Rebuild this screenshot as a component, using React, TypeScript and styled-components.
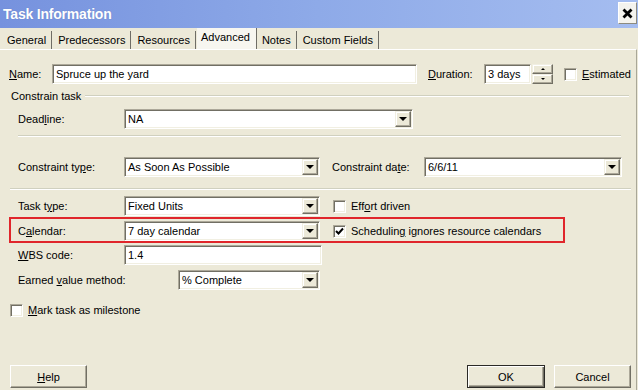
import styled, { createGlobalStyle } from 'styled-components';

const GlobalStyle = createGlobalStyle`
  html, body {
    margin: 0;
    padding: 0;
    background: #ece9d8;
  }
  body {
    font-family: "Liberation Sans", Arial, sans-serif;
    font-size: 11px;
    color: #000;
  }
  u {
    text-decoration: underline;
    text-underline-offset: 1px;
  }
`;

const Window = styled.div`
  width: 638px;
  height: 390px;
  display: flex;
  flex-direction: column;
  overflow: hidden;
  background: #ece9d8;
`;

const TitleBar = styled.div`
  height: 28px;
  flex-shrink: 0;
  display: flex;
  align-items: center;
  justify-content: space-between;
  padding: 0 1px 0 3px;
  background: linear-gradient(to right, #7692de 0%, #8eaae8 50%, #a5bdf0 100%);
`;

const Title = styled.div`
  font-size: 14px;
  font-weight: bold;
  color: #fff;
  letter-spacing: -0.2px;
  text-shadow: 0 0 1px rgba(60, 80, 140, 0.4);
  margin-top: -1px;
`;

const CloseButton = styled.div`
  width: 19px;
  height: 22px;
  margin-top: -2px;
  display: flex;
  align-items: center;
  justify-content: center;
  background: #f4f3ee;
  border: 1px solid;
  border-color: #fff #8d8b80 #8d8b80 #fff;
  box-sizing: border-box;
`;

const TabStrip = styled.div`
  height: 21px;
  flex-shrink: 0;
  display: flex;
  align-items: flex-end;
  padding-left: 2px;
`;

const Tab = styled.div<{ $active?: boolean }>`
  height: ${(p) => (p.$active ? 21 : 18)}px;
  padding: 0 ${(p) => (p.$active ? 6 : 5)}px 0 ${(p) => (p.$active ? 4 : 5)}px;
  margin: 0 ${(p) => (p.$active ? 0 : 1)}px 0 0;
  display: flex;
  align-items: center;
  box-sizing: border-box;
  border-right: 1px solid #6f6d66;
  background: ${(p) => (p.$active ? '#f7f6f0' : 'transparent')};
  white-space: nowrap;
  line-height: 1;
  padding-bottom: ${(p) => (p.$active ? 3 : 0)}px;
`;

const Panel = styled.div`
  flex: 1;
  display: flex;
  flex-direction: column;
  border-top: 1px solid #fff;
  border-right: 1px solid #a9a798;
  margin-right: 1px;
  padding-bottom: 2px;
`;

const Row = styled.div<{ $top: number; $left?: number; $mark?: boolean }>`
  position: relative;
  display: flex;
  align-items: center;
  height: 20px;
  margin-top: ${(p) => p.$top}px;
  padding-left: ${(p) => p.$left ?? 18}px;
  flex-shrink: 0;

  ${(p) =>
    p.$mark &&
    `
    &::after {
      content: '';
      position: absolute;
      left: 9px;
      top: -4px;
      width: 556px;
      height: 26px;
      box-sizing: border-box;
      border: 2px solid #e0262b;
      pointer-events: none;
    }
  `}
`;

const Label = styled.span<{ $w?: number; $gap?: number }>`
  width: ${(p) => (p.$w ? `${p.$w}px` : 'auto')};
  margin-left: ${(p) => p.$gap ?? 0}px;
  flex-shrink: 0;
  white-space: nowrap;
`;

const Field = styled.div<{ $w: number }>`
  width: ${(p) => p.$w}px;
  height: 20px;
  box-sizing: border-box;
  flex-shrink: 0;
  display: flex;
  align-items: center;
  justify-content: space-between;
  background: #fff;
  border: 1px solid;
  border-color: #aca899 #fff #fff #aca899;
  box-shadow: inset 1px 1px 0 #716f64, inset -1px -1px 0 #f1efe2;
  padding-left: 3px;
  white-space: nowrap;
`;

const DropButton = styled.div`
  width: 16px;
  height: 16px;
  margin-right: 1px;
  box-sizing: border-box;
  display: flex;
  align-items: center;
  justify-content: center;
  background: #ece9d8;
  border: 1px solid;
  border-color: #f1efe2 #716f64 #716f64 #f1efe2;
  box-shadow: inset -1px -1px 0 #aca899, inset 1px 1px 0 #fff;
`;

const Triangle = styled.span<{ $up?: boolean; $size?: number }>`
  width: 0;
  height: 0;
  border-left: ${(p) => p.$size ?? 4}px solid transparent;
  border-right: ${(p) => p.$size ?? 4}px solid transparent;
  ${(p) =>
    p.$up
      ? `border-bottom: ${Math.ceil((p.$size ?? 4) / 2) + 1}px solid #000;`
      : `border-top: ${p.$size ?? 4}px solid #000;`}
`;

const Spinner = styled.div`
  width: 21px;
  height: 20px;
  margin-left: 1px;
  display: flex;
  flex-direction: column;
  flex-shrink: 0;
`;

const SpinButton = styled(DropButton)`
  width: 21px;
  height: 10px;
  margin: 0;
`;

const Check = styled.div<{ $gap: number }>`
  width: 13px;
  height: 13px;
  margin-left: ${(p) => p.$gap}px;
  margin-right: 5px;
  box-sizing: border-box;
  flex-shrink: 0;
  display: flex;
  align-items: center;
  justify-content: center;
  background: #fff;
  border: 1px solid;
  border-color: #aca899 #fff #fff #aca899;
  box-shadow: inset 1px 1px 0 #716f64, inset -1px -1px 0 #f1efe2;
`;

const GroupHeader = styled.div`
  display: flex;
  align-items: center;
  height: 12px;
  margin-top: 6px;
  padding-left: 11px;
  padding-right: 7px;
  flex-shrink: 0;
  gap: 4px;

  &::after {
    content: '';
    flex: 1;
    height: 0;
    border-top: 1px solid #d0d0bf;
    border-bottom: 1px solid #fff;
  }
`;

const Etch = styled.div<{ $top: number; $left: number; $right: number }>`
  height: 0;
  flex-shrink: 0;
  margin: ${(p) => p.$top}px ${(p) => p.$right}px 0 ${(p) => p.$left}px;
  border-top: 1px solid #d0d0bf;
  border-bottom: 1px solid #fff;
`;

const Footer = styled.div`
  margin-top: auto;
  display: flex;
  align-items: center;
  padding: 0 5px 0 10px;
`;

const Button = styled.div<{ $default?: boolean }>`
  width: ${(p) => (p.$default ? 78 : 77)}px;
  height: 23px;
  box-sizing: border-box;
  display: flex;
  align-items: center;
  justify-content: center;
  background: #ece9d8;
  border: 1px solid;
  border-color: ${(p) => (p.$default ? '#2b2a26' : '#fff #716f64 #716f64 #fff')};
  box-shadow: ${(p) =>
    p.$default
      ? 'inset 1px 1px 0 #fff, inset -1px -1px 0 #716f64, inset -2px -2px 0 #aca899'
      : 'inset -1px -1px 0 #aca899'};
  margin-left: ${(p) => (p.$default ? 'auto' : '9px')};
  &:first-child {
    margin-left: 0;
  }
`;

const Combo = ({ w, value }: { w: number; value: string }) => (
  <Field $w={w}>
    <span>{value}</span>
    <DropButton>
      <Triangle />
    </DropButton>
  </Field>
);

const CheckMark = () => (
  <svg width="9" height="9" viewBox="0 0 9 9">
    <path d="M1 4 L3.5 6.5 L8 1.5" fill="none" stroke="#000" strokeWidth="2" />
  </svg>
);

export default function App() {
  return (
    <Window>
      <GlobalStyle />
      <TitleBar>
        <Title>Task Information</Title>
        <CloseButton>
          <svg width="11" height="11" viewBox="0 0 11 11">
            <path d="M1.5 1.5 L9.5 9.5 M9.5 1.5 L1.5 9.5" stroke="#000" strokeWidth="2.8" />
          </svg>
        </CloseButton>
      </TitleBar>

      <TabStrip>
        <Tab>General</Tab>
        <Tab>Predecessors</Tab>
        <Tab>Resources</Tab>
        <Tab $active>Advanced</Tab>
        <Tab>Notes</Tab>
        <Tab>Custom Fields</Tab>
      </TabStrip>

      <Panel>
        <Row $top={14} $left={9}>
          <Label $w={43}>
            <u>N</u>ame:
          </Label>
          <Field $w={365}>Spruce up the yard</Field>
          <Label $w={56} $gap={11}>
            <u>D</u>uration:
          </Label>
          <Field $w={47}>3 days</Field>
          <Spinner>
            <SpinButton>
              <Triangle $up $size={2} />
            </SpinButton>
            <SpinButton>
              <Triangle $size={2} />
            </SpinButton>
          </Spinner>
          <Check $gap={11} />
          <Label>
            <u>E</u>stimated
          </Label>
        </Row>

        <GroupHeader>Constrain task</GroupHeader>

        <Row $top={7}>
          <Label $w={106}>
            Dead<u>l</u>ine:
          </Label>
          <Combo w={289} value="NA" />
        </Row>

        <Etch $top={6} $left={18} $right={15} />

        <Row $top={20}>
          <Label $w={106}>
            Constraint ty<u>p</u>e:
          </Label>
          <Combo w={196} value="As Soon As Possible" />
          <Label $w={92} $gap={12}>
            Constraint da<u>t</u>e:
          </Label>
          <Combo w={198} value="6/6/11" />
        </Row>

        <Etch $top={11} $left={10} $right={5} />

        <Row $top={6}>
          <Label $w={106}>
            Task t<u>y</u>pe:
          </Label>
          <Combo w={196} value="Fixed Units" />
          <Check $gap={13} />
          <Label>
            Eff<u>o</u>rt driven
          </Label>
        </Row>

        <Row $top={5} $mark>
          <Label $w={106}>
            C<u>a</u>lendar:
          </Label>
          <Combo w={196} value="7 day calendar" />
          <Check $gap={13}>
            <CheckMark />
          </Check>
          <Label>
            Schedulin<u>g</u> ignores resource calendars
          </Label>
        </Row>

        <Row $top={4}>
          <Label $w={106}>
            <u>W</u>BS code:
          </Label>
          <Field $w={198}>1.4</Field>
        </Row>

        <Row $top={5}>
          <Label $w={160}>
            Earned <u>v</u>alue method:
          </Label>
          <Combo w={142} value="% Complete" />
        </Row>

        <Row $top={10} $left={0}>
          <Check $gap={10} />
          <Label>
            <u>M</u>ark task as milestone
          </Label>
        </Row>

        <Footer>
          <Button>
            <span>
              <u>H</u>elp
            </span>
          </Button>
          <Button $default>OK</Button>
          <Button>Cancel</Button>
        </Footer>
      </Panel>
    </Window>
  );
}
